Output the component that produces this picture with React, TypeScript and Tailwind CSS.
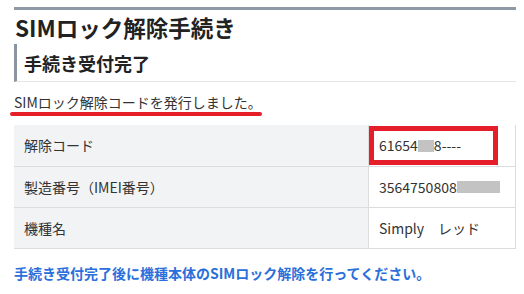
const font = {
  fontFamily: '"Noto Sans CJK JP", "Noto Sans", sans-serif',
};

type Row = { label: string; value: React.ReactNode; mark?: boolean };

function Redacted({ w }: { w: number }) {
  return (
    <span
      className="inline-block h-[12px] bg-[#c3c3c3] align-[-1px]"
      style={{ width: w }}
    />
  );
}

export default function App() {
  const rows: Row[] = [
    {
      label: "解除コード",
      value: (
        <>
          61654
          <Redacted w={16} />
          8----
        </>
      ),
      mark: true,
    },
    {
      label: "製造番号（IMEI番号）",
      value: (
        <>
          3564750808
          <Redacted w={43} />
        </>
      ),
    },
    { label: "機種名", value: "Simply　レッド" },
  ];

  return (
    <div className="w-[524px] h-[294px] bg-white overflow-hidden" style={font}>
      <div className="pl-[14px] pr-[8px] pt-[7px]">
        {/* page heading */}
        <div className="h-[3px] bg-[#8e99a6]" />
        <h1 className="h-[34px] pl-[1px] text-[22.5px] leading-[35px] font-bold text-[#222]">
          SIMロック解除手続き
        </h1>

        {/* sub heading */}
        <div className="h-[38px] border-l-[3px] border-b border-l-[#8a95a2] border-b-[#e6e6e6] pl-[7px] flex items-center">
          <h2 className="text-[18px] font-bold text-[#222] leading-none">
            手続き受付完了
          </h2>
        </div>

        <p className="mt-[10px] text-[14px] leading-[20px] text-[#333]">
          SIMロック解除コードを発行しました。
        </p>
        <div className="ml-[-4px] w-[252px] h-[4px] rounded-full bg-[#e61e2a]" />

        {/* result table */}
        <div className="mt-[9px] border-r border-b border-[#dcdcdc] text-[14px] text-[#333]">
          {rows.map((r, i) => (
            <div
              key={r.label}
              className={`flex h-[41px] ${i > 0 ? "border-t border-[#dcdcdc]" : ""}`}
            >
              <div className="w-[354px] bg-[#f2f3f5] pl-[10px] flex items-center">
                {r.label}
              </div>
              <div className="relative flex-1 border-l border-[#dcdcdc] pl-[10px] flex items-center">
                {r.value}
                {r.mark && (
                  <div className="absolute left-0 top-[1px] w-[129px] h-[39px] border-[5px] border-[#e61e2a]" />
                )}
              </div>
            </div>
          ))}
        </div>

        <p className="mt-[14px] text-[14px] leading-[20px] font-bold text-[#2a6fdb]">
          手続き受付完了後に機種本体のSIMロック解除を行ってください。
        </p>
      </div>
    </div>
  );
}
